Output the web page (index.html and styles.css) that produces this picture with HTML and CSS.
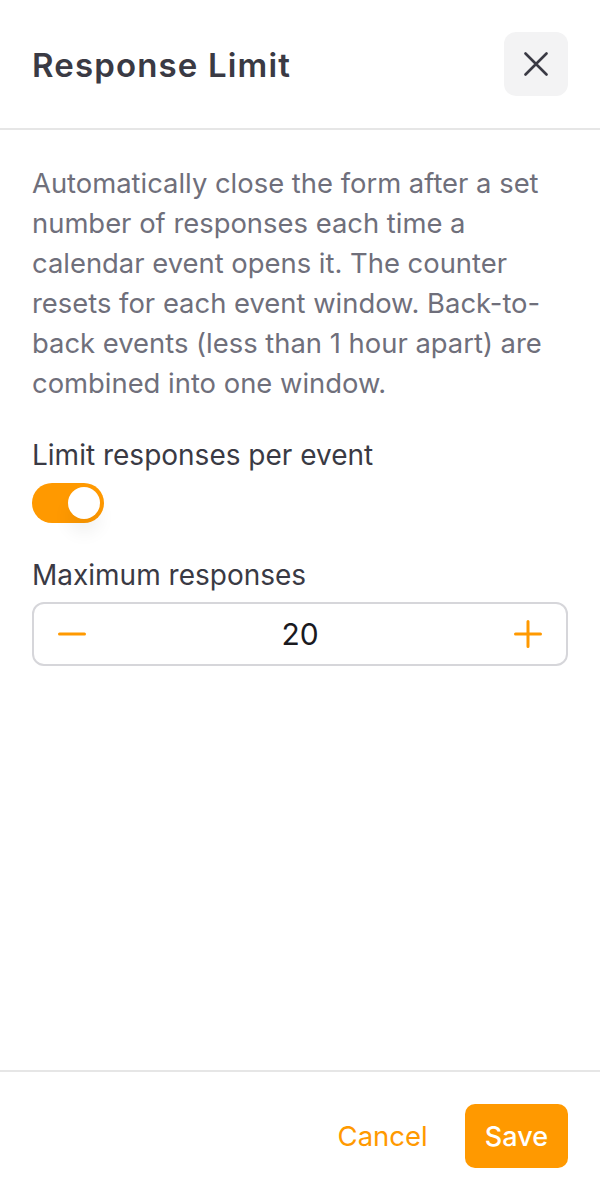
FILE: index.html
```html
<!DOCTYPE html>
<html lang="en">
<head>
<meta charset="utf-8">
<title>Response Limit</title>
<link rel="stylesheet" href="styles.css">
</head>
<body>
<div class="sheet">
  <header class="sheet-header">
    <h1 class="sheet-title">Response Limit</h1>
    <button class="close-btn" aria-label="Close">
      <svg width="24" height="24" viewBox="0 0 24 24" fill="none" stroke="#3a3a44" stroke-width="2.6" stroke-linecap="round"><path d="M1.5 1.5 L22.5 22.5 M22.5 1.5 L1.5 22.5"/></svg>
    </button>
  </header>
  <main class="sheet-body">
    <p class="desc">Automatically close the form after a set number of responses each time a calendar event opens it. The counter resets for each event window. Back-to-back events (less than 1 hour apart) are combined into one window.</p>
    <div class="field">
      <div class="label">Limit responses per event</div>
      <div class="toggle on"><span class="thumb"></span></div>
    </div>
    <div class="field field-max">
      <div class="label">Maximum responses</div>
      <div class="stepper">
        <button class="step-btn" aria-label="Decrease">
          <svg width="28" height="28" viewBox="0 0 28 28" fill="none" stroke="#ff9900" stroke-width="3" stroke-linecap="round"><path d="M1.5 14 H26.5"/></svg>
        </button>
        <span class="step-value">20</span>
        <button class="step-btn" aria-label="Increase">
          <svg width="28" height="28" viewBox="0 0 28 28" fill="none" stroke="#ff9900" stroke-width="3" stroke-linecap="round"><path d="M1.5 14 H26.5 M14 1.5 V26.5"/></svg>
        </button>
      </div>
    </div>
  </main>
  <footer class="sheet-footer">
    <button class="btn-cancel">Cancel</button>
    <button class="btn-save">Save</button>
  </footer>
</div>
</body>
</html>
```

FILE: styles.css
```css
* { box-sizing: border-box; }
html, body { margin: 0; padding: 0; background: #fff; }
body { font-family: Inter, "Noto Sans", "Liberation Sans", sans-serif; color: #3a3a44; }
button { font-family: inherit; border: none; background: none; padding: 0; cursor: pointer; }

.sheet { height: 1200px; display: flex; flex-direction: column; }

.sheet-header {
  height: 130px;
  padding: 32px 32px 0 32px;
  display: flex;
  align-items: flex-start;
  justify-content: space-between;
  border-bottom: 2px solid #e6e6e6;
}
.sheet-title {
  margin: 0;
  font-size: 33px;
  font-weight: 600;
  line-height: 66px;
  color: #3a3a44;
  letter-spacing: 1.15px;
}
.close-btn {
  width: 64px; height: 64px;
  border-radius: 12px;
  background: #f3f3f4;
  display: flex; align-items: center; justify-content: center;
}

.sheet-body { flex: 1; padding: 33px 32px 0 32px; }
.desc {
  margin: 0;
  font-size: 27.4px;
  line-height: 40px;
  color: #6f6f7b;
}
.field { margin-top: 36px; }
.label { font-size: 28px; line-height: 32px; color: #3a3a44; }

.toggle {
  margin-top: 12px;
  width: 72px; height: 40px;
  border-radius: 20px;
  background: #ff9900;
  padding: 4px;
  display: flex;
  justify-content: flex-end;
}
.thumb {
  width: 32px; height: 32px;
  border-radius: 50%;
  background: #fff;
  box-shadow: 0 14px 18px rgba(0,0,0,0.06);
}

.field-max { margin-top: 36px; }
.stepper {
  margin-top: 11px;
  height: 64px;
  border: 2px solid #d6d6da;
  border-radius: 12px;
  display: flex;
  align-items: center;
  justify-content: space-between;
  padding: 0 24px 0 24px;
}
.step-btn { width: 28px; height: 28px; display: flex; align-items: center; justify-content: center; }
.step-value { font-size: 30px; color: #1a1a1f; }

.sheet-footer {
  height: 130px;
  border-top: 2px solid #e6e6e6;
  display: flex;
  align-items: center;
  justify-content: flex-end;
  gap: 37px;
  padding: 0 32px;
}
.btn-cancel { font-size: 27.5px; color: #ff9900; }
.btn-save {
  height: 64px;
  padding: 0 20px;
  border-radius: 10px;
  background: #ff9900;
  color: #fff;
  font-size: 27px;
  font-weight: 500;
}
```
